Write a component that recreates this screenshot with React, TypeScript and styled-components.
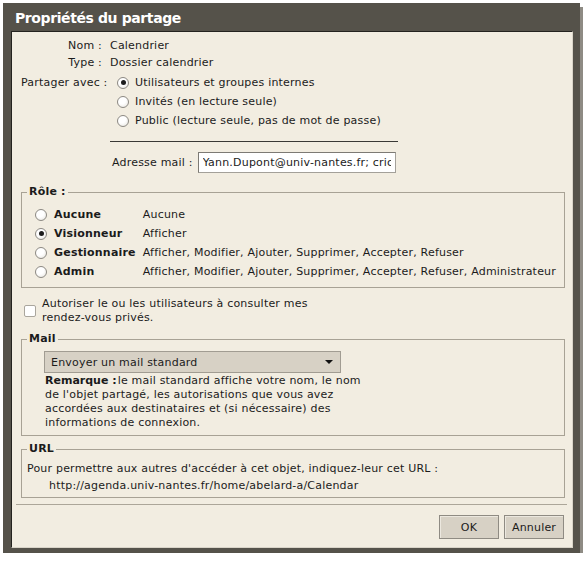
import React, { useState } from 'react';
import styled, { createGlobalStyle } from 'styled-components';

const GlobalStyle = createGlobalStyle`
  html, body {
    margin: 0;
    padding: 0;
    background: #ffffff;
  }
  body {
    font-family: 'DejaVu Sans', Verdana, sans-serif;
    font-size: 11px;
    letter-spacing: 0.2px;
    color: #1b1b1b;
  }
`;

const Dialog = styled.div`
  margin: 3px 0 0 3px;
  width: 577px;
  height: 550px;
  background: #55524a;
  box-shadow: 3px 4px 0 #8e8b84;
  display: flex;
  flex-direction: column;
`;

const TitleBar = styled.div`
  height: 28px;
  padding: 2px 0 0 12px;
  box-sizing: border-box;
  line-height: 26px;
  color: #ffffff;
  font-weight: bold;
  font-size: 14px;
  letter-spacing: -0.4px;
`;

const Panel = styled.div`
  margin: 0 7px 0 8px;
  height: 517px;
  box-sizing: border-box;
  background: #f2ede1;
  border: 1px solid #d9d4c8;
  border-top-color: #24231f;
  border-left-color: #24231f;
  padding: 5px 7px 0 9px;
  display: flex;
  flex-direction: column;
`;

const InfoGrid = styled.div`
  display: grid;
  grid-template-columns: 81px 1fr;
  column-gap: 8px;
  grid-auto-rows: auto;
`;

const InfoLabel = styled.div<{ $radio?: boolean }>`
  text-align: right;
  white-space: nowrap;
  line-height: ${(p) => (p.$radio ? '19px' : '17px')};
  margin-top: ${(p) => (p.$radio ? '2px' : '0')};
`;

const InfoValue = styled.div`
  line-height: 17px;
`;

const RadioList = styled.div`
  margin-top: 2px;
  display: flex;
  flex-direction: column;
`;

const RadioOption = styled.label`
  height: 19px;
  display: flex;
  align-items: center;
  gap: 6px;
  padding-left: 7px;
  cursor: pointer;
`;

const Radio = styled.span<{ $checked?: boolean }>`
  width: 12px;
  height: 12px;
  box-sizing: border-box;
  border-radius: 50%;
  border: 1px solid #8c8983;
  background: radial-gradient(circle at 40% 35%, #ffffff 40%, #e4e1da 100%);
  display: inline-flex;
  align-items: center;
  justify-content: center;
  flex: none;

  &::after {
    content: '';
    width: 5px;
    height: 5px;
    border-radius: 50%;
    background: #1c1c1c;
    display: ${(p) => (p.$checked ? 'block' : 'none')};
  }
`;

const Rule = styled.div`
  grid-column: 2;
  width: 288px;
  height: 1px;
  margin-top: 11px;
  background: #3a3936;
`;

const AddressRow = styled.div`
  grid-column: 2;
  margin-top: 10px;
  display: flex;
  align-items: center;
  gap: 5px;
  padding-left: 2px;
`;

const TextInput = styled.input`
  width: 198px;
  height: 21px;
  box-sizing: border-box;
  border: 1px solid #a3a099;
  border-top-color: #7d7a74;
  border-left-color: #7d7a74;
  background: #ffffff;
  padding: 0 4px;
  font-family: 'DejaVu Sans', Verdana, sans-serif;
  font-size: 11px;
  letter-spacing: 0.2px;
  color: #1b1b1b;
  outline: none;
`;

const Group = styled.fieldset<{ $gap: number }>`
  margin: ${(p) => p.$gap}px 0 0;
  padding: 0;
  border: 1px solid #a8a295;
  min-width: 0;
`;

const Legend = styled.legend`
  margin-left: 5px;
  padding: 0 2px;
  font-weight: bold;
  line-height: 14px;
`;

const RoleGrid = styled.div`
  display: grid;
  grid-template-columns: 12px auto 1fr;
  grid-auto-rows: 19px;
  column-gap: 7px;
  align-items: center;
  padding: 6px 0 6px 13px;
`;

const RoleName = styled.span`
  font-weight: bold;
  white-space: nowrap;
`;

const RoleRights = styled.span`
  white-space: nowrap;
`;

const CheckRow = styled.label`
  margin-top: 9px;
  display: flex;
  align-items: center;
  gap: 6px;
  padding-left: 3px;
  line-height: 14px;
`;

const CheckBox = styled.span`
  width: 12px;
  height: 12px;
  box-sizing: border-box;
  flex: none;
  border: 1px solid #aaa69d;
  border-radius: 2px;
  background: #ffffff;
`;

const CheckText = styled.span`
  max-width: 300px;
`;

const MailBody = styled.div`
  padding: 5px 0 5px 22px;
`;

const SelectBox = styled.div`
  width: 297px;
  height: 22px;
  box-sizing: border-box;
  border: 1px solid #a19c92;
  background: #d7d1c5;
  display: flex;
  align-items: center;
  justify-content: space-between;
  padding: 0 7px 0 6px;
`;

const Caret = styled.span`
  width: 0;
  height: 0;
  border-left: 4px solid transparent;
  border-right: 4px solid transparent;
  border-top: 4px solid #111111;
`;

const Note = styled.p`
  margin: 1px 0 0 1px;
  width: 322px;
  line-height: 14px;
`;

const NoteLead = styled.strong`
  font-weight: bold;
  letter-spacing: 0;
  margin-right: 1px;
`;

const UrlBody = styled.div`
  padding: 4px 0 3px 5px;
  line-height: 17px;
`;

const UrlLine = styled.div`
  padding-left: 22px;
`;

const Separator = styled.div`
  height: 1px;
  margin: 6px -2px 0 -5px;
  background: #aca699;
`;

const ButtonBar = styled.div`
  margin-top: 10px;
  display: flex;
  justify-content: flex-end;
  gap: 5px;
  padding-right: 1px;
`;

const Button = styled.button`
  width: 60px;
  height: 24px;
  box-sizing: border-box;
  border: 1px solid #8f8b83;
  background: #d7d1c5;
  box-shadow: inset 1px 1px 0 #ece8df;
  font-family: 'DejaVu Sans', Verdana, sans-serif;
  font-size: 11px;
  letter-spacing: 0.2px;
  color: #1b1b1b;
  padding: 0;
  cursor: pointer;
`;

type ShareOption = { value: string; label: string };

const shareOptions: ShareOption[] = [
  { value: 'internal', label: 'Utilisateurs et groupes internes' },
  { value: 'guest', label: 'Invités (en lecture seule)' },
  { value: 'public', label: 'Public (lecture seule, pas de mot de passe)' },
];

type Role = { value: string; name: string; rights: string };

const roles: Role[] = [
  { value: 'none', name: 'Aucune', rights: 'Aucune' },
  { value: 'viewer', name: 'Visionneur', rights: 'Afficher' },
  {
    value: 'manager',
    name: 'Gestionnaire',
    rights: 'Afficher, Modifier, Ajouter, Supprimer, Accepter, Refuser',
  },
  {
    value: 'admin',
    name: 'Admin',
    rights: 'Afficher, Modifier, Ajouter, Supprimer, Accepter, Refuser, Administrateur',
  },
];

const App = () => {
  const [share, setShare] = useState('internal');
  const [role, setRole] = useState('viewer');
  const [privateOk, setPrivateOk] = useState(false);

  return (
    <>
      <GlobalStyle />
      <Dialog>
        <TitleBar>Propriétés du partage</TitleBar>
        <Panel>
          <InfoGrid>
            <InfoLabel>Nom :</InfoLabel>
            <InfoValue>Calendrier</InfoValue>
            <InfoLabel>Type :</InfoLabel>
            <InfoValue>Dossier calendrier</InfoValue>
            <InfoLabel $radio>Partager avec :</InfoLabel>
            <RadioList>
              {shareOptions.map((opt) => (
                <RadioOption key={opt.value} onClick={() => setShare(opt.value)}>
                  <Radio $checked={share === opt.value} />
                  <span>{opt.label}</span>
                </RadioOption>
              ))}
            </RadioList>
            <Rule />
            <AddressRow>
              <span>Adresse mail :</span>
              <TextInput
                readOnly
                value="Yann.Dupont@univ-nantes.fr; cricri.martin@univ-nantes.fr"
              />
            </AddressRow>
          </InfoGrid>

          <Group $gap={12}>
            <Legend>Rôle :</Legend>
            <RoleGrid>
              {roles.map((r) => (
                <React.Fragment key={r.value}>
                  <Radio $checked={role === r.value} onClick={() => setRole(r.value)} />
                  <RoleName>{r.name}</RoleName>
                  <RoleRights>{r.rights}</RoleRights>
                </React.Fragment>
              ))}
            </RoleGrid>
          </Group>

          <CheckRow onClick={() => setPrivateOk(!privateOk)}>
            <CheckBox />
            <CheckText>
              Autoriser le ou les utilisateurs à consulter mes rendez-vous privés.
            </CheckText>
          </CheckRow>

          <Group $gap={7}>
            <Legend>Mail</Legend>
            <MailBody>
              <SelectBox>
                <span>Envoyer un mail standard</span>
                <Caret />
              </SelectBox>
              <Note>
                <NoteLead>Remarque :</NoteLead>le mail standard affiche votre nom, le nom de
                l'objet partagé, les autorisations que vous avez accordées aux destinataires et
                (si nécessaire) des informations de connexion.
              </Note>
            </MailBody>
          </Group>

          <Group $gap={6}>
            <Legend>URL</Legend>
            <UrlBody>
              <div>Pour permettre aux autres d'accéder à cet objet, indiquez-leur cet URL :</div>
              <UrlLine>http://agenda.univ-nantes.fr/home/abelard-a/Calendar</UrlLine>
            </UrlBody>
          </Group>

          <Separator />
          <ButtonBar>
            <Button>OK</Button>
            <Button>Annuler</Button>
          </ButtonBar>
        </Panel>
      </Dialog>
    </>
  );
};

export default App;
